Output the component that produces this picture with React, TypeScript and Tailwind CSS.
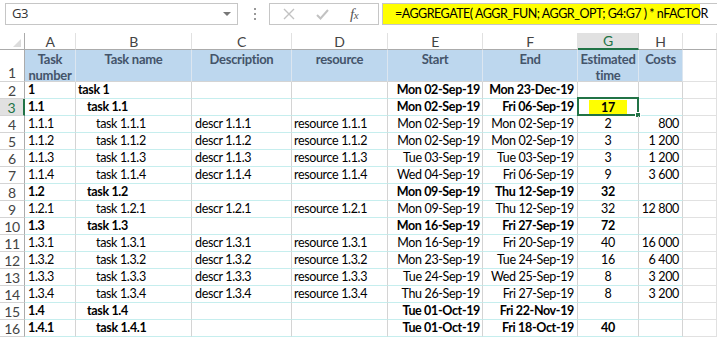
import React from "react";

type Row = {
  n: number;
  a: string;
  b: string;
  indent: 0 | 1 | 2;
  bold?: boolean;
  c?: string;
  d?: string;
  e: string;
  f: string;
  g?: string;
  h?: string;
};

const rows: Row[] = [
  { n: 2, a: "1", b: "task 1", indent: 0, bold: true, e: "Mon 02-Sep-19", f: "Mon 23-Dec-19" },
  { n: 3, a: "1.1", b: "task 1.1", indent: 1, bold: true, e: "Mon 02-Sep-19", f: "Fri 06-Sep-19", g: "17" },
  { n: 4, a: "1.1.1", b: "task 1.1.1", indent: 2, c: "descr 1.1.1", d: "resource 1.1.1", e: "Mon 02-Sep-19", f: "Mon 02-Sep-19", g: "2", h: "800" },
  { n: 5, a: "1.1.2", b: "task 1.1.2", indent: 2, c: "descr 1.1.2", d: "resource 1.1.2", e: "Mon 02-Sep-19", f: "Mon 02-Sep-19", g: "3", h: "1 200" },
  { n: 6, a: "1.1.3", b: "task 1.1.3", indent: 2, c: "descr 1.1.3", d: "resource 1.1.3", e: "Tue 03-Sep-19", f: "Tue 03-Sep-19", g: "3", h: "1 200" },
  { n: 7, a: "1.1.4", b: "task 1.1.4", indent: 2, c: "descr 1.1.4", d: "resource 1.1.4", e: "Wed 04-Sep-19", f: "Fri 06-Sep-19", g: "9", h: "3 600" },
  { n: 8, a: "1.2", b: "task 1.2", indent: 1, bold: true, e: "Mon 09-Sep-19", f: "Thu 12-Sep-19", g: "32" },
  { n: 9, a: "1.2.1", b: "task 1.2.1", indent: 2, c: "descr 1.2.1", d: "resource 1.2.1", e: "Mon 09-Sep-19", f: "Thu 12-Sep-19", g: "32", h: "12 800" },
  { n: 10, a: "1.3", b: "task 1.3", indent: 1, bold: true, e: "Mon 16-Sep-19", f: "Fri 27-Sep-19", g: "72" },
  { n: 11, a: "1.3.1", b: "task 1.3.1", indent: 2, c: "descr 1.3.1", d: "resource 1.3.1", e: "Mon 16-Sep-19", f: "Fri 20-Sep-19", g: "40", h: "16 000" },
  { n: 12, a: "1.3.2", b: "task 1.3.2", indent: 2, c: "descr 1.3.2", d: "resource 1.3.2", e: "Mon 23-Sep-19", f: "Tue 24-Sep-19", g: "16", h: "6 400" },
  { n: 13, a: "1.3.3", b: "task 1.3.3", indent: 2, c: "descr 1.3.3", d: "resource 1.3.3", e: "Tue 24-Sep-19", f: "Wed 25-Sep-19", g: "8", h: "3 200" },
  { n: 14, a: "1.3.4", b: "task 1.3.4", indent: 2, c: "descr 1.3.4", d: "resource 1.3.4", e: "Thu 26-Sep-19", f: "Fri 27-Sep-19", g: "8", h: "3 200" },
  { n: 15, a: "1.4", b: "task 1.4", indent: 1, bold: true, e: "Tue 01-Oct-19", f: "Fri 22-Nov-19" },
  { n: 16, a: "1.4.1", b: "task 1.4.1", indent: 2, bold: true, e: "Tue 01-Oct-19", f: "Fri 18-Oct-19", g: "40" },
];

const indentPad = ["pl-[2px]", "pl-[11px]", "pl-[20px]"];

const cell = "h-[17px] flex items-center whitespace-nowrap overflow-visible border-r border-b border-r-[#d4d4d4] border-b-[#c6eeee]";

const Toolbar = () => (
  <div className="flex h-[33px] items-start pt-[3px]">
    <div className="ml-[5px] flex h-[22px] w-[233px] items-center justify-between border border-[#c6c6c6] pl-[6px] pr-[6px] font-['Open_Sans',sans-serif] text-[13px] text-[#333]">
      <span>G3</span>
      <svg width="8" height="5" viewBox="0 0 8 5">
        <polygon points="0,0 8,0 4,4" fill="#777" />
      </svg>
    </div>
    <div className="ml-[15px] flex h-[22px] w-[3px] flex-col items-center justify-center gap-[3px]">
      <span className="h-[2px] w-[2px] bg-[#999]" />
      <span className="h-[2px] w-[2px] bg-[#999]" />
      <span className="h-[2px] w-[2px] bg-[#999]" />
    </div>
    <div className="ml-[13px] flex h-[22px] w-[110px] items-center border border-[#c6c6c6]">
      <svg className="ml-[13px]" width="12" height="12" viewBox="0 0 12 12">
        <path d="M1 1 L11 11 M11 1 L1 11" stroke="#c2c2c2" strokeWidth="1.4" />
      </svg>
      <svg className="ml-[21px]" width="13" height="11" viewBox="0 0 13 11">
        <path d="M1 6 L4.5 9.5 L12 1" stroke="#c2c2c2" strokeWidth="2" fill="none" />
      </svg>
      <span className="ml-[21px] font-['Liberation_Serif',serif] text-[15px] italic text-[#555]">
        f<span className="text-[11px]">x</span>
      </span>
    </div>
    <div className="ml-[3px] flex h-[22px] flex-1 border-y border-l border-[#c6c6c6]">
      <div className="flex h-full w-[317px] items-center bg-[#ffff00] pl-[12px] text-[12.5px] tracking-[-0.5px] text-black whitespace-nowrap">
        =AGGREGATE( AGGR_FUN; AGGR_OPT; G4:G7 ) * nFACTOR
      </div>
    </div>
  </div>
);

const letters = ["A", "B", "C", "D", "E", "F", "G", "H", ""];

const ColumnHeader = () => (
  <>
    <div className="flex h-[17px] items-end justify-end border-r border-b border-[#ababab] pr-[3px] pb-[2px]">
      <svg width="8" height="8" viewBox="0 0 8 8">
        <polygon points="8,0 8,8 0,8" fill="#dcdcdc" />
      </svg>
    </div>
    {letters.map((l, i) =>
      l === "G" ? (
        <div
          key={i}
          className="flex h-[17px] items-center justify-center border-r border-r-[#d4d4d4] border-b-2 border-b-[#217346] bg-[#e1e1e1] text-[14px] text-[#217346]"
        >
          {l}
        </div>
      ) : (
        <div
          key={i}
          className="flex h-[17px] items-center justify-center border-r border-b border-r-[#e1e1e1] border-b-[#ababab] text-[14px] text-[#444]"
        >
          {l}
        </div>
      )
    )}
  </>
);

const TitleRow = () => {
  const titles: React.ReactNode[] = [
    <>Task<br />number</>,
    "Task name",
    "Description",
    "resource",
    "Start",
    "End",
    <>Estimated<br />time</>,
    "Costs",
  ];
  return (
    <>
      <div className="flex h-[32px] items-end justify-center border-r border-b border-r-[#ababab] border-b-[#d4d4d4] text-[14px] leading-[16px] text-[#444]">
        1
      </div>
      {titles.map((t, i) => (
        <div
          key={i}
          className="h-[32px] border-r border-b border-r-[#dce6f0] border-b-[#d4d4d4] bg-[#bdd7ee] pt-[1px] text-center text-[13px] font-bold leading-[16px] tracking-[-0.3px] text-[#44546a]"
        >
          {t}
        </div>
      ))}
      <div className="h-[32px] border-r border-b border-[#e1e1e1]" />
    </>
  );
};

const DataRow = ({ r }: { r: Row }) => {
  const sel = r.n === 3;
  const b = r.bold ? "font-bold" : "";
  return (
    <>
      <div
        className={
          sel
            ? "flex h-[17px] items-center justify-center border-r-2 border-b border-r-[#217346] border-b-[#d4d4d4] bg-[#e1e1e1] text-[14px] text-[#217346]"
            : "flex h-[17px] items-center justify-center border-r border-b border-r-[#ababab] border-b-[#d4d4d4] text-[14px] text-[#444]"
        }
      >
        {r.n}
      </div>
      <div className={`${cell} pl-[3px] ${b}`}>{r.a}</div>
      <div className={`${cell} ${indentPad[r.indent]} ${b}`}>{r.b}</div>
      <div className={`${cell} pl-[3px]`}>{r.c}</div>
      <div className={`${cell} pl-[2px]`}>{r.d}</div>
      <div className={`${cell} justify-end pr-[2px] ${b}`}>{r.e}</div>
      <div className={`${cell} justify-end pr-[3px] ${b}`}>{r.f}</div>
      <div className={`${cell} relative justify-center ${b}`}>
        {sel ? (
          <>
            <span className="inline-block w-[38px] bg-[#ffff00] text-center leading-[15px]">{r.g}</span>
            <div className="pointer-events-none absolute -top-[2px] -left-[1px] h-[19px] w-[62px] border-2 border-[#217346]" />
            <div className="absolute -right-[3px] -bottom-[3px] h-[6px] w-[6px] border border-white bg-[#217346]" />
          </>
        ) : (
          r.g
        )}
      </div>
      <div className={`${cell} justify-end pr-[3px]`}>{r.h}</div>
      <div className="h-[17px] border-r border-b border-r-[#e1e1e1] border-b-[#e1e1e1]" />
    </>
  );
};

export default function App() {
  return (
    <div className="h-[339px] w-[717px] overflow-hidden bg-white font-['Lato',sans-serif] text-[12.5px] tracking-[-0.35px] text-black">
      <Toolbar />
      <div className="grid grid-cols-[25px_51px_116px_100px_96px_95px_95px_61px_44px_34px]">
        <ColumnHeader />
        <TitleRow />
        {rows.map((r) => (
          <DataRow key={r.n} r={r} />
        ))}
      </div>
    </div>
  );
}
